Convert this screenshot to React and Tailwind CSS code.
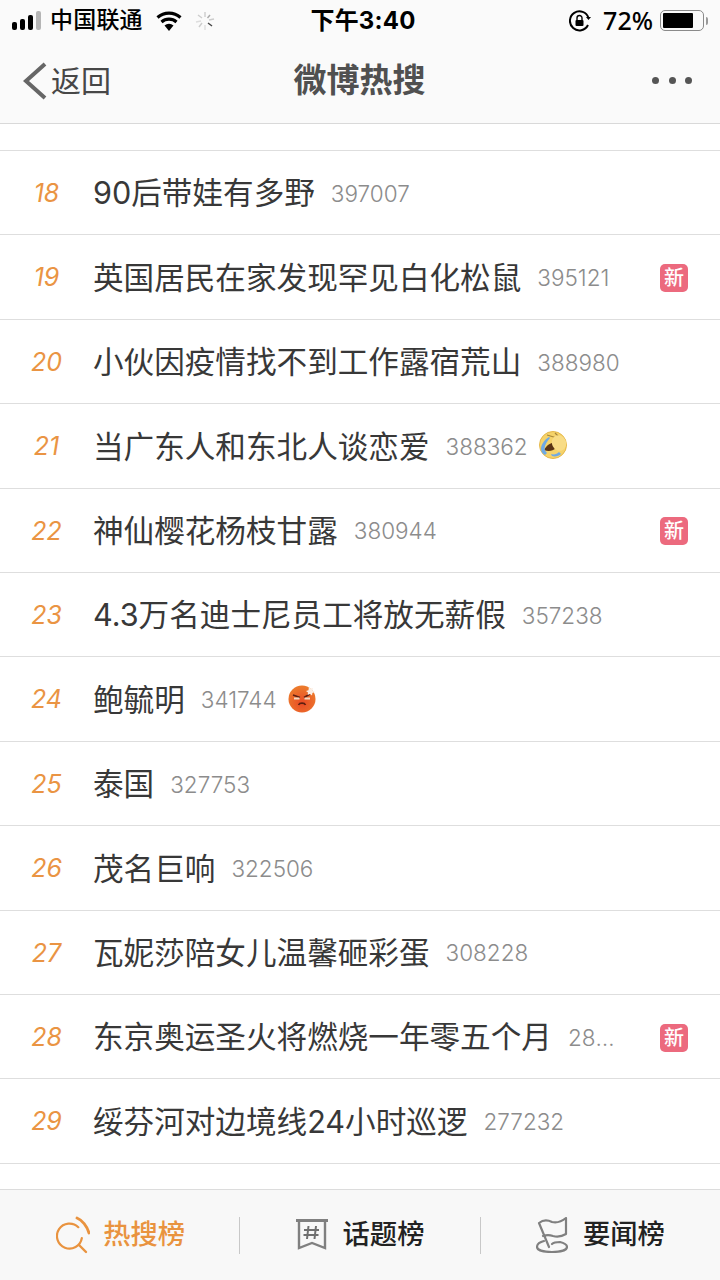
import React from 'react';

const rows = [
  { rank: 18, title: '90后带娃有多野', count: '397007' },
  { rank: 19, title: '英国居民在家发现罕见白化松鼠', count: '395121', isNew: true },
  { rank: 20, title: '小伙因疫情找不到工作露宿荒山', count: '388980' },
  { rank: 21, title: '当广东人和东北人谈恋爱', count: '388362', emoji: 'laugh' },
  { rank: 22, title: '神仙樱花杨枝甘露', count: '380944', isNew: true },
  { rank: 23, title: '4.3万名迪士尼员工将放无薪假', count: '357238' },
  { rank: 24, title: '鲍毓明', count: '341744', emoji: 'angry' },
  { rank: 25, title: '泰国', count: '327753' },
  { rank: 26, title: '茂名巨响', count: '322506' },
  { rank: 27, title: '瓦妮莎陪女儿温馨砸彩蛋', count: '308228' },
  { rank: 28, title: '东京奥运圣火将燃烧一年零五个月', count: '2834567', isNew: true },
  { rank: 29, title: '绥芬河对边境线24小时巡逻', count: '277232' },
];

const LaughEmoji = () => (
  <svg width="30" height="30" viewBox="0 0 30 30" className="shrink-0 ml-[10px] mb-[3px]">
    <circle cx="15" cy="15" r="13.5" fill="#f5d36a" stroke="#e6b84a" strokeWidth="1" />
    <path d="M6 20c3-6 9-9 14-7 0 5-6 10-14 7z" fill="#5a3414" />
    <path d="M9 5l10 3M17 3l10 10" stroke="#a8853a" strokeWidth="1.2" fill="none" />
    <ellipse cx="21" cy="13" rx="7" ry="8" fill="#f8dc86" transform="rotate(-25 21 13)" />
    <path d="M11 7c-5 3-8 8-8 12 0 3 2 5 4 6l2-2c-2-2-3-4-2-7 1-3 3-6 5-8z" fill="#6ea9e4" />
    <path d="M14 26c3 1 7 0 9-2l-2-2c-2 2-5 3-8 2z" fill="#6ea9e4" />
  </svg>
);

const AngryEmoji = () => (
  <svg width="28" height="28" viewBox="0 0 28 28" className="shrink-0 ml-[11px] mb-[3px]">
    <defs>
      <radialGradient id="angry" cx="50%" cy="65%" r="60%">
        <stop offset="0%" stopColor="#ea4a26" />
        <stop offset="100%" stopColor="#ec7a2c" />
      </radialGradient>
    </defs>
    <circle cx="14" cy="14" r="13.5" fill="url(#angry)" />
    <path d="M5 10l7 2.500M22 9l-6 3.500" stroke="#5e2010" strokeWidth="1.600" />
    <path d="M6 13.500h5.500M16.500 13.500H22" stroke="#f4d8c0" strokeWidth="1.800" />
    <path d="M10.500 20c1-2.500 6-2.500 7 0" stroke="#5e2010" strokeWidth="1.600" fill="none" />
    <path d="M21 1l1.400 2.600L25 3l-.6 2.600L27 7l-2.600 1L24 10.500l-2-1.500-2.400 1 .4-2.600L18 6l2.500-.8z" fill="#fbeee4" />
  </svg>
);

const SearchIcon = () => (
  <svg width="34" height="38" viewBox="0 0 34 38" fill="none" stroke="#e9933f" strokeWidth="2.200" strokeLinecap="round" className="ml-[2px] -mr-[2px]">
    <path d="M22.300 11.200A12.500 12.500 0 1 0 25.800 22.200" />
    <path d="M21 2c5 2 10 8 12 15" strokeWidth="2.800" />
    <path d="M23 29l7 7" strokeWidth="2.400" />
  </svg>
);

const TopicIcon = () => (
  <svg width="32" height="32" viewBox="0 0 32 32" fill="none" stroke="#808080">
    <path d="M0 1.500h32" strokeWidth="3" />
    <path d="M3 2v27l13-5 13 5V2" strokeWidth="2.400" />
    <path d="M12.500 7l-1.500 13M20 7l-1.500 13M8 11h15M7.500 16h15" strokeWidth="2" stroke="#707070" />
  </svg>
);

const FlagIcon = () => (
  <svg width="32" height="36" viewBox="0 0 32 36" fill="none" stroke="#808080" strokeWidth="2.200" strokeLinejoin="round" strokeLinecap="round">
    <path d="M13 30L3 6c5-4 9-3 13-1 4 1 9 0 14-4v16c-5 3-9 3-13 2-3-1-7-1-10 0" />
    <path d="M8 24C4 25 1 27 1 30c0 3 6 5 15 5s15-2 15-5c0-2-3-4-7-5-4 0-7 1-8 2" />
  </svg>
);

const StatusBar = () => (
  <div className="h-[40px] flex items-center text-black shrink-0 pt-[1px]">
    <div className="flex-1 flex items-center pl-[12px]">
      <div className="flex items-end gap-[3px] h-[20px] mb-[2px]">
        <span className="w-[5px] h-[8px] bg-black rounded-[2px]" />
        <span className="w-[5px] h-[11px] bg-black rounded-[2px]" />
        <span className="w-[5px] h-[15px] bg-black rounded-[2px]" />
        <span className="w-[5px] h-[19px] bg-[#b5b5b5] rounded-[2px]" />
      </div>
      <span className="ml-[9px] text-[23px] font-medium tracking-[0.2px]">中国联通</span>
      <svg width="28" height="20" viewBox="0 0 28 20" className="ml-[12px]">
        <path d="M14 20l-4.500-5.500a7 7 0 0 1 9 0z" fill="#000" />
        <path d="M6.500 11a11.500 11.500 0 0 1 15 0M2.500 6.500a17.500 17.500 0 0 1 23 0" stroke="#000" strokeWidth="3.200" fill="none" />
      </svg>
      <svg width="20" height="20" viewBox="0 0 20 20" className="ml-[12px]" stroke="#888" strokeWidth="1.400">
        <path d="M10 1v5" stroke="#ccc" />
        <path d="M15 4l-2.500 3" stroke="#aaa" />
        <path d="M19 8l-5 1" stroke="#ccc" />
        <path d="M17 15l-4-3" stroke="#444" />
        <path d="M10 19v-5" stroke="#ddd" />
        <path d="M4 16l3-4" stroke="#ccc" />
        <path d="M1 11l5-1" stroke="#ddd" />
        <path d="M3 4l4 3" stroke="#ccc" />
      </svg>
    </div>
    <span className="ml-[6px] text-[24px] font-bold font-['Inter','Noto_Sans_CJK_SC',sans-serif] tracking-[0.2px]">下午3:40</span>
    <div className="flex-1 flex items-center justify-end pr-[12px]">
      <svg width="24" height="22" viewBox="0 0 24 22" fill="none">
        <path d="M19 15a9.500 9.500 0 1 1 .5-7" stroke="#000" strokeWidth="2" />
        <path d="M17 7h5l-2.500 3z" fill="#000" />
        <rect x="6.500" y="10" width="8" height="6" rx="1" fill="#000" />
        <path d="M8 10V8a2.500 2.500 0 0 1 5 0v2" stroke="#000" strokeWidth="1.400" />
      </svg>
      <span className="ml-[10px] text-[25px] font-medium font-['Noto_Sans',sans-serif]">72%</span>
      <div className="ml-[7px] w-[44px] h-[21px] rounded-[5px] border-[1.5px] border-[#8a8a8a] p-[2px]">
        <div className="w-[30px] h-full bg-black rounded-[1px]" />
      </div>
      <span className="ml-[2px] w-[2px] h-[8px] bg-[#9a9a9a] rounded-r-[2px]" />
    </div>
  </div>
);

const NavBar = () => (
  <div className="h-[84px] flex items-center border-b border-[#d9d9d9] bg-[#fafafa] shrink-0 text-[#474747]">
    <div className="flex-1 flex items-center pl-[23px]">
      <svg width="24" height="38" viewBox="0 0 24 38" fill="none" stroke="#666" strokeWidth="4" className="mb-[1px]">
        <path d="M22 2L3 19l19 17" />
      </svg>
      <span className="ml-[4px] text-[30px] leading-none">返回</span>
    </div>
    <span className="ml-[4px] text-[33px] font-bold text-[#505050] pb-[2px]">微博热搜</span>
    <div className="flex-1 flex items-center justify-end pr-[28px] gap-[9.500px] pb-[3px]">
      <span className="w-[7px] h-[7px] rounded-full bg-[#555]" />
      <span className="w-[7px] h-[7px] rounded-full bg-[#555]" />
      <span className="w-[7px] h-[7px] rounded-full bg-[#555]" />
    </div>
  </div>
);

const Row = ({ rank, title, count, isNew, emoji }) => (
  <div className="h-[84.420px] flex items-center border-b border-[#dedede] pr-[32px] pt-[2px] font-['Inter','Noto_Sans_CJK_SC',sans-serif]">
    <span className="w-[93px] shrink-0 text-center italic text-[25px] text-[#ea9443]">{rank}</span>
    <span className="shrink-0 text-[30.600px] text-[#383838] leading-none">{title}</span>
    <span className="ml-[16px] min-w-0 truncate text-[22.500px] font-light text-[#8c8c8c]">{count}</span>
    {emoji === 'laugh' && <LaughEmoji />}
    {emoji === 'angry' && <AngryEmoji />}
    {isNew && (
      <div className="ml-auto pl-[40px] shrink-0">
        <span className="w-[28px] h-[28px] rounded-[5px] bg-[#ec6a7e] text-white text-[20px] font-medium flex items-center justify-center">新</span>
      </div>
    )}
  </div>
);

const Tab = ({ icon, label, active }) => (
  <div className="flex-1 flex items-center justify-center gap-[15px]">
    {icon}
    <span className={`text-[27.300px] font-medium ${active ? 'text-[#e9933f]' : 'text-[#222]'}`}>{label}</span>
  </div>
);

export default function App() {
  return (
    <div className="w-[720px] h-[1280px] flex flex-col overflow-hidden bg-white font-['Liberation_Sans','Noto_Sans_CJK_SC',sans-serif]">
      <div className="bg-[#fafafa] shrink-0">
        <StatusBar />
        <NavBar />
      </div>
      <div className="flex-1 min-h-0 overflow-hidden">
        <div className="h-[27px] border-b border-[#dedede]" />
        {rows.map(row => (
          <Row key={row.rank} {...row} />
        ))}
      </div>
      <div className="h-[91px] shrink-0 flex items-center border-t border-[#dcdcdc] bg-[#f8f8f8]">
        <Tab active icon={<SearchIcon />} label="热搜榜" />
        <span className="w-px h-[37px] bg-[#c8c8c8]" />
        <Tab icon={<TopicIcon />} label="话题榜" />
        <span className="w-px h-[37px] bg-[#c8c8c8]" />
        <Tab icon={<FlagIcon />} label="要闻榜" />
      </div>
    </div>
  );
}
